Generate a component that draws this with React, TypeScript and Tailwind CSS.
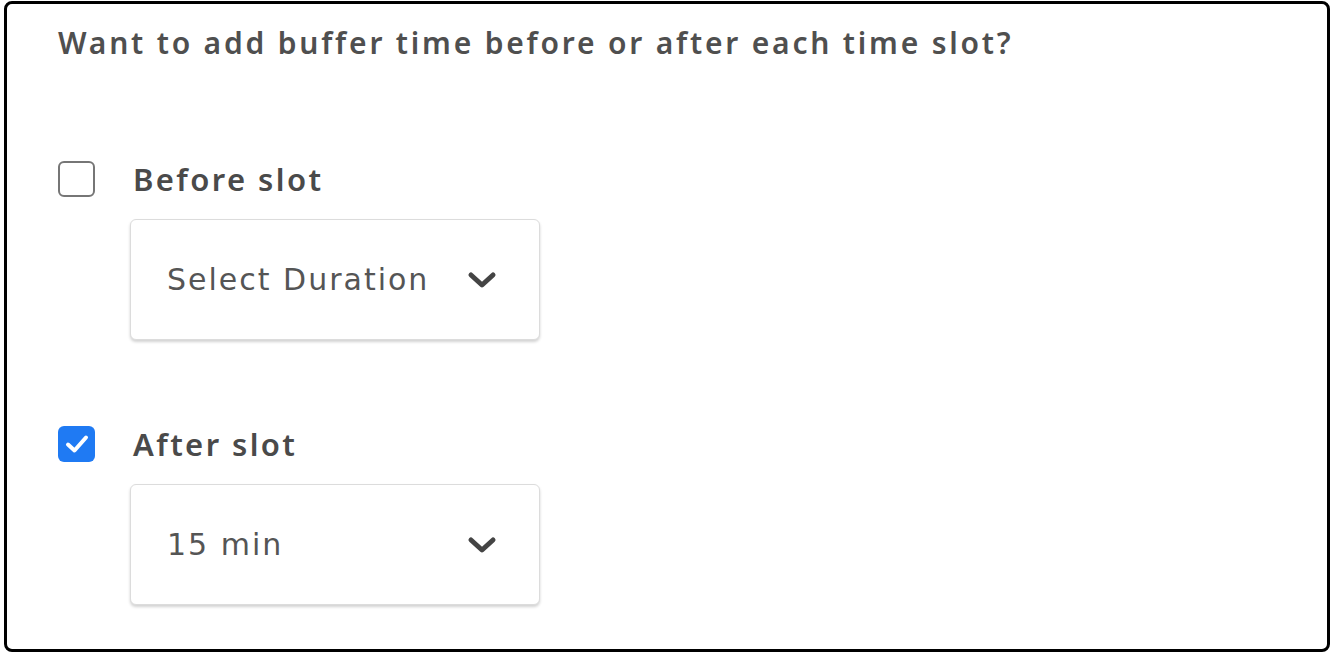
import { useState } from "react";

function Chevron() {
  return (
    <svg width="30" height="18" viewBox="0 0 30 18" fill="none" className="shrink-0">
      <path d="M4 4 L15 14 L26 4" stroke="#444" strokeWidth="5" strokeLinecap="round" strokeLinejoin="round" />
    </svg>
  );
}

function DurationSelect({ value }: { value: string }) {
  return (
    <button className="ml-[72px] flex h-[121px] w-[410px] items-center justify-between rounded-[6px] border border-[#dcdcdc] bg-white pl-[36px] pr-[42px] shadow-[0_2px_3px_rgba(0,0,0,0.18)]">
      <span className="font-['DejaVu_Sans',sans-serif] text-[30px] tracking-[2px] text-[#555]">{value}</span>
      <Chevron />
    </button>
  );
}

function SlotCheckbox({ label, checked, onToggle }: { label: string; checked: boolean; onToggle: () => void }) {
  return (
    <label className="flex h-[36px] cursor-pointer items-center gap-[38px]" onClick={onToggle}>
      {checked ? (
        <span className="flex h-[36px] w-[37px] items-center justify-center rounded-[6px] bg-[#1f7af3]">
          <svg width="24" height="20" viewBox="0 0 24 20" fill="none">
            <path d="M3 10.5 L9.5 16.5 L21 3.5" stroke="white" strokeWidth="4" strokeLinecap="round" strokeLinejoin="round" />
          </svg>
        </span>
      ) : (
        <span className="h-[36px] w-[37px] rounded-[6px] border-2 border-[#767676] bg-white" />
      )}
      <span className="font-['Noto_Sans',sans-serif] text-[31px] font-semibold tracking-[2.4px] text-[#4a4a4a]">{label}</span>
    </label>
  );
}

export default function App() {
  const [before, setBefore] = useState(false);
  const [after, setAfter] = useState(true);

  return (
    <div className="bg-white pl-[4px] pt-[1px]">
      <div className="h-[651px] w-[1326px] rounded-[8px] border-[3px] border-black bg-white pl-[51px] pt-[20px]">
        <h2 className="font-['Noto_Sans',sans-serif] text-[30px] leading-[38px] font-semibold tracking-[2.8px] text-[#4f4f4f]">
          Want to add buffer time before or after each time slot?
        </h2>

        <div className="mt-[99px]">
          <SlotCheckbox label="Before slot" checked={before} onToggle={() => setBefore(!before)} />
        </div>
        <div className="mt-[22px]">
          <DurationSelect value="Select Duration" />
        </div>

        <div className="mt-[86px]">
          <SlotCheckbox label="After slot" checked={after} onToggle={() => setAfter(!after)} />
        </div>
        <div className="mt-[22px]">
          <DurationSelect value="15 min" />
        </div>
      </div>
    </div>
  );
}
